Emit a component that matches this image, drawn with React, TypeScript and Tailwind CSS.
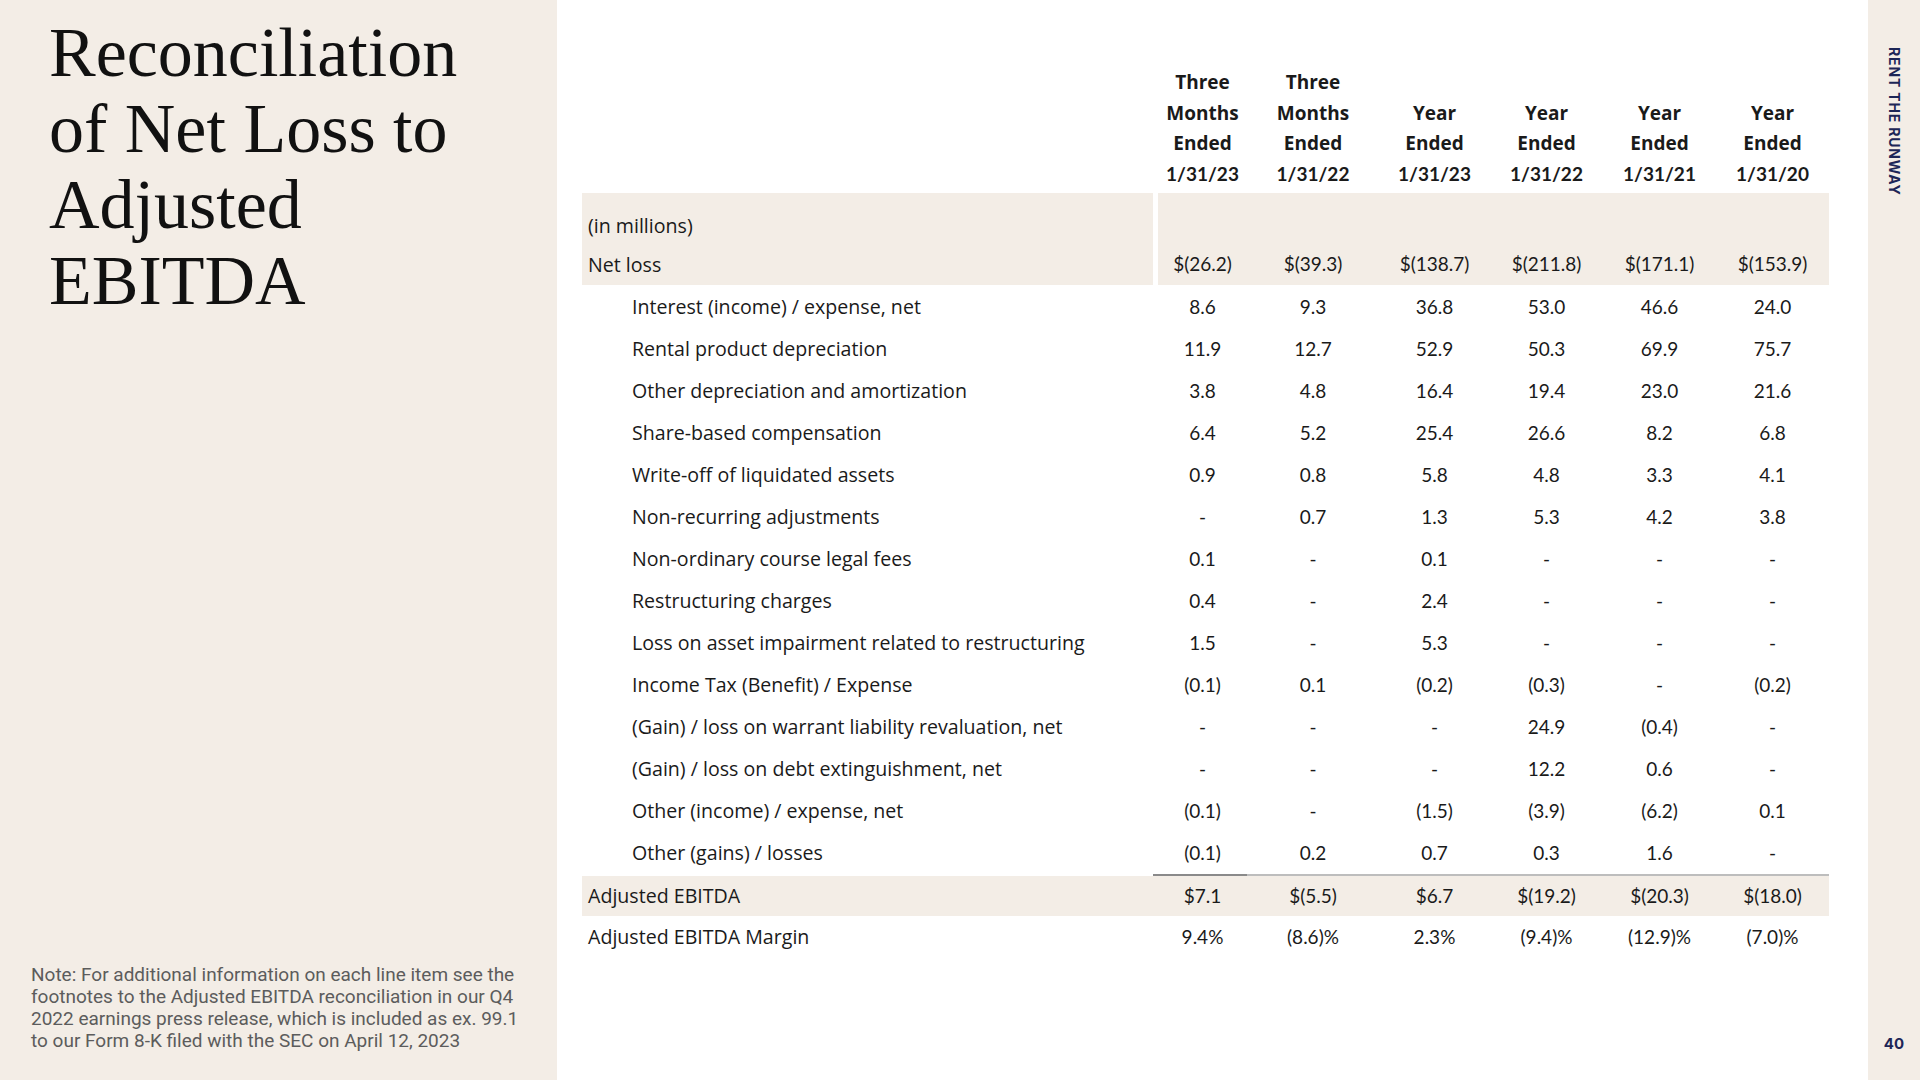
import React from 'react'

const cols = [
  ['Three', 'Months', 'Ended', '1/31/23'],
  ['Three', 'Months', 'Ended', '1/31/22'],
  ['Year', 'Ended', '1/31/23'],
  ['Year', 'Ended', '1/31/22'],
  ['Year', 'Ended', '1/31/21'],
  ['Year', 'Ended', '1/31/20'],
]

const netLoss = ['$(26.2)', '$(39.3)', '$(138.7)', '$(211.8)', '$(171.1)', '$(153.9)']

const rows: [string, string[]][] = [
  ['Interest (income) / expense, net', ['8.6', '9.3', '36.8', '53.0', '46.6', '24.0']],
  ['Rental product depreciation', ['11.9', '12.7', '52.9', '50.3', '69.9', '75.7']],
  ['Other depreciation and amortization', ['3.8', '4.8', '16.4', '19.4', '23.0', '21.6']],
  ['Share-based compensation', ['6.4', '5.2', '25.4', '26.6', '8.2', '6.8']],
  ['Write-off of liquidated assets', ['0.9', '0.8', '5.8', '4.8', '3.3', '4.1']],
  ['Non-recurring adjustments', ['-', '0.7', '1.3', '5.3', '4.2', '3.8']],
  ['Non-ordinary course legal fees', ['0.1', '-', '0.1', '-', '-', '-']],
  ['Restructuring charges', ['0.4', '-', '2.4', '-', '-', '-']],
  ['Loss on asset impairment related to restructuring', ['1.5', '-', '5.3', '-', '-', '-']],
  ['Income Tax (Benefit) / Expense', ['(0.1)', '0.1', '(0.2)', '(0.3)', '-', '(0.2)']],
  ['(Gain) / loss on warrant liability revaluation, net', ['-', '-', '-', '24.9', '(0.4)', '-']],
  ['(Gain) / loss on debt extinguishment, net', ['-', '-', '-', '12.2', '0.6', '-']],
  ['Other (income) / expense, net', ['(0.1)', '-', '(1.5)', '(3.9)', '(6.2)', '0.1']],
  ['Other (gains) / losses', ['(0.1)', '0.2', '0.7', '0.3', '1.6', '-']],
]

const adjusted = ['$7.1', '$(5.5)', '$6.7', '$(19.2)', '$(20.3)', '$(18.0)']
const margin = ['9.4%', '(8.6)%', '2.3%', '(9.4)%', '(12.9)%', '(7.0)%']

const grid = 'grid grid-cols-[576px_89px_132px_111px_113px_113px_113px]'
const labelFont = { fontFamily: '"Open Sans", Lato, sans-serif' }

export default function App() {
  return (
    <div className="flex w-[1920px] h-[1080px] overflow-hidden bg-white text-[#1a1a1a]" style={{ fontFamily: 'Lato, "Open Sans", sans-serif' }}>
      {/* Left title panel */}
      <div className="w-[557px] shrink-0 bg-[#f3ede6] flex flex-col justify-between pt-[15px] pb-[28px]">
        <h1 className="pl-[49px] text-[70px] leading-[76px] text-[#111]" style={{ fontFamily: '"Liberation Serif", "DejaVu Serif", serif' }}>
          Reconciliation
          <br />
          of Net Loss to
          <br />
          Adjusted
          <br />
          EBITDA
        </h1>
        <p className="pl-[31px] text-[19px] leading-[22px] text-[#5c5c5c] whitespace-nowrap" style={{ fontFamily: 'Roboto, sans-serif' }}>
          Note: For additional information on each line item see the
          <br />
          footnotes to the Adjusted EBITDA reconciliation in our Q4
          <br />
          2022 earnings press release, which is included as ex. 99.1
          <br />
          to our Form 8-K filed with the SEC on April 12, 2023
        </p>
      </div>

      {/* Table */}
      <div className="flex-1 pl-[25px] pt-[67px]">
        {/* Header */}
        <div className={`${grid} h-[122px]`}>
          <div />
          {cols.map((c, i) => (
            <div key={i} className="flex flex-col justify-end items-center text-[19px] leading-[30.5px] font-bold">
              {c.map((l, j) => (
                <span key={j} style={j === c.length - 1 ? undefined : labelFont}>
                  {l}
                </span>
              ))}
            </div>
          ))}
        </div>

        <div className="h-[4px]" />

        {/* In millions */}
        <div className={`${grid} h-[51px] text-[19.6px]`}>
          <div className="bg-[#f3ede6] mr-[5px] pl-[6px] pt-[18px]" style={labelFont}>
            (in millions)
          </div>
          {cols.map((_, i) => (
            <div key={i} className="bg-[#f3ede6]" />
          ))}
        </div>

        {/* Net loss */}
        <div className={`${grid} h-[41px] text-[19px] items-stretch`}>
          <div className="bg-[#f3ede6] mr-[5px] pl-[6px] flex items-center text-[19.6px]" style={labelFont}>
            Net loss
          </div>
          {netLoss.map((v, i) => (
            <div key={i} className="bg-[#f3ede6] flex items-center justify-center">{v}</div>
          ))}
        </div>

        {/* Body */}
        <div className="pt-[1px]">
          {rows.map(([label, vals]) => (
            <div key={label} className={`${grid} h-[42px] text-[19px]`}>
              <div className="pl-[50px] flex items-center text-[19.6px]" style={labelFont}>
                {label}
              </div>
              {vals.map((v, i) => (
                <div key={i} className="flex items-center justify-center">{v}</div>
              ))}
            </div>
          ))}
        </div>

        {/* Adjusted EBITDA */}
        <div className={`${grid} h-[42px] text-[19px]`}>
          <div className="bg-[#f3ede6] mr-[5px] mt-[2px] pl-[6px] flex items-center text-[19.6px]" style={labelFont}>
            Adjusted EBITDA
          </div>
          {adjusted.map((v, i) => (
            <div
              key={i}
              className={`bg-[#f3ede6] flex items-center justify-center border-t-2 ${i === 0 ? 'border-[#8a8a8a] -ml-[5px] pl-[5px]' : 'border-[#bdbdbd]'}`}
            >
              {v}
            </div>
          ))}
        </div>

        {/* Margin */}
        <div className={`${grid} h-[42px] text-[19px]`}>
          <div className="pl-[6px] flex items-center text-[19.6px]" style={labelFont}>
            Adjusted EBITDA Margin
          </div>
          {margin.map((v, i) => (
            <div key={i} className="flex items-center justify-center">{v}</div>
          ))}
        </div>
      </div>

      {/* Right brand strip */}
      <div className="w-[52px] shrink-0 bg-[#f3ede6] flex flex-col items-center justify-between pt-[47px] pb-[25px] text-[#1d2657]" style={{ fontFamily: 'Inter, sans-serif' }}>
        <span className="[writing-mode:vertical-rl] text-[14px] font-bold tracking-[0.06em]">RENT THE RUNWAY</span>
        <span className="text-[15px] font-bold">40</span>
      </div>
    </div>
  )
}
